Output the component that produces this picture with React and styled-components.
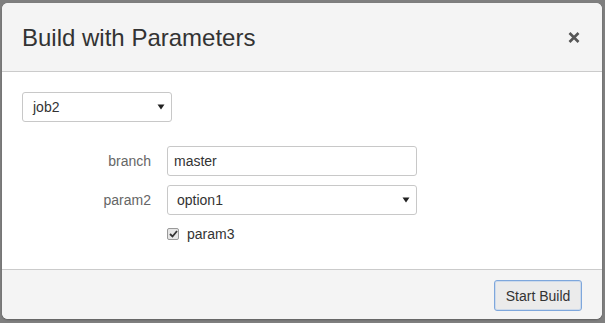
import React from "react";
import styled, { createGlobalStyle } from "styled-components";

const Global = createGlobalStyle`
  html, body { margin: 0; padding: 0; }
  body {
    background: #7f7f7f;
    font-family: "Liberation Sans", Arial, sans-serif;
    width: 605px;
    height: 323px;
    overflow: hidden;
  }
`;

const Backdrop = styled.div`
  padding: 3px 3px 4px 2px;
  height: 316px;
`;

const Modal = styled.div`
  width: 600px;
  height: 316px;
  background: #fff;
  border-radius: 6px;
  overflow: hidden;
  display: flex;
  flex-direction: column;
  box-shadow: 0 1px 2px rgba(0, 0, 0, 0.25);
`;

const Header = styled.div`
  height: 68px;
  flex: none;
  background: #f4f4f4;
  border-bottom: 1px solid #cbcbcb;
  display: flex;
  align-items: center;
  justify-content: space-between;
  padding: 0 22px 0 20px;
`;

const Title = styled.h4`
  margin: 0;
  font-size: 24px;
  font-weight: normal;
  color: #333;
  line-height: 1;
  padding-top: 1px;
`;

const Close = styled.button`
  border: 0;
  background: none;
  padding: 0;
  display: flex;
  cursor: pointer;
`;

const Body = styled.div`
  flex: 1;
  padding: 20px 0 0 20px;
`;

const JobSelect = styled.div`
  width: 150px;
  height: 30px;
  box-sizing: border-box;
  border: 1px solid #c8c8c8;
  border-radius: 3px;
  display: flex;
  align-items: center;
  justify-content: space-between;
  padding: 0 6px 0 10px;
  font-size: 14px;
  color: #333;
`;

const Form = styled.div`
  margin-top: 24px;
  display: grid;
  grid-template-columns: 129px 250px;
  column-gap: 16px;
  row-gap: 9px;
  align-items: center;
`;

const Label = styled.label`
  text-align: right;
  font-size: 14px;
  color: #666;
`;

const Field = styled.div`
  height: 30px;
  box-sizing: border-box;
  border: 1px solid #c8c8c8;
  border-radius: 3px;
  display: flex;
  align-items: center;
  justify-content: space-between;
  padding: ${(p) => (p.$select ? "0 6px 0 9px" : "0 6px")};
  font-size: 14px;
  color: #333;
`;

const CheckRow = styled.div`
  grid-column: 2;
  display: flex;
  align-items: center;
  gap: 8px;
  font-size: 14px;
  color: #333;
  margin-top: 2px;
`;

const Box = styled.span`
  width: 12px;
  height: 12px;
  box-sizing: border-box;
  border: 1px solid #9a9a9a;
  border-radius: 2px;
  background: #e6e6e6;
  display: flex;
  align-items: center;
  justify-content: center;
`;

const Footer = styled.div`
  flex: none;
  background: #f4f4f4;
  border-top: 1px solid #cbcbcb;
  display: flex;
  align-items: flex-start;
  justify-content: flex-end;
  padding: 10px 20px 0 0;
  box-sizing: border-box;
  height: 50px;
`;

const Button = styled.button`
  width: 88px;
  height: 31px;
  box-sizing: border-box;
  border: 1px solid #7ea7dc;
  border-radius: 3px;
  background: #ebebeb;
  box-shadow: inset 0 0 0 1px rgba(150, 185, 235, 0.35);
  font-family: "Liberation Sans", Arial, sans-serif;
  font-size: 14px;
  color: #333;
  padding: 0;
`;

const Caret = () => (
  <svg width="8" height="6" viewBox="0 0 8 6">
    <path d="M0.5 0.5 H7.5 L4 5.5 Z" fill="#222" />
  </svg>
);

export default function App() {
  return (
    <>
      <Global />
      <Backdrop>
        <Modal>
          <Header>
            <Title>Build with Parameters</Title>
            <Close aria-label="close">
              <svg width="12" height="11" viewBox="0 0 12 11">
                <path d="M1.5 1 L10.5 10 M10.5 1 L1.5 10" stroke="#555" strokeWidth="2.6" />
              </svg>
            </Close>
          </Header>
          <Body>
            <JobSelect>
              <span>job2</span>
              <Caret />
            </JobSelect>
            <Form>
              <Label>branch</Label>
              <Field>master</Field>
              <Label>param2</Label>
              <Field $select>
                <span>option1</span>
                <Caret />
              </Field>
              <CheckRow>
                <Box>
                  <svg width="9" height="8" viewBox="0 0 9 8">
                    <path d="M1 4 L3.5 6.5 L8 1" stroke="#333" strokeWidth="1.8" fill="none" />
                  </svg>
                </Box>
                <span>param3</span>
              </CheckRow>
            </Form>
          </Body>
          <Footer>
            <Button>Start Build</Button>
          </Footer>
        </Modal>
      </Backdrop>
    </>
  );
}
